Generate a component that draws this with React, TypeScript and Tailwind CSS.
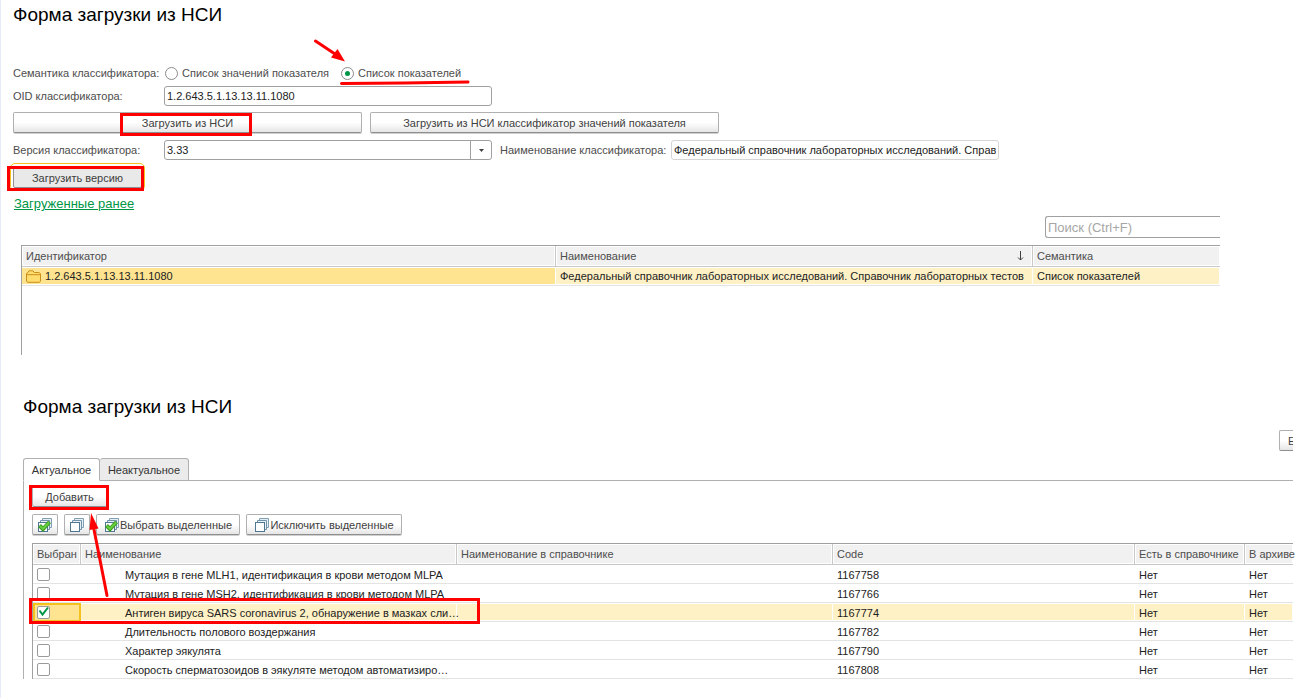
import React, { useState } from 'react';

interface TestRow {
  code: string;
  name: string;
}

const rows: TestRow[] = [
  { code: '1167758', name: 'Мутация в гене MLH1, идентификация в крови методом MLPA' },
  { code: '1167766', name: 'Мутация в гене MSH2, идентификация в крови методом MLPA' },
  { code: '1167774', name: 'Антиген вируса SARS coronavirus 2, обнаружение в мазках сли…' },
  { code: '1167782', name: 'Длительность полового воздержания' },
  { code: '1167790', name: 'Характер эякулята' },
  { code: '1167808', name: 'Скорость сперматозоидов в эякуляте методом автоматизиро…' },
];

const buttonClass =
  'flex h-[21px] items-center justify-center whitespace-nowrap rounded-[2px] border border-[#b0b0b0] border-b-[#8f8f8f] bg-linear-to-b from-white from-50% to-[#e6e6e6] shadow-[0_1px_0_#d0d0d0] text-[#404040]';
const fieldClass = 'h-5 w-full rounded-[3px] border border-[#a0a0a0] bg-white px-0.5 text-[#222] outline-none';
const radioClass =
  'grid size-[13px] appearance-none place-content-center rounded-full border border-[#8a8a8a] bg-white before:size-[5px] before:rounded-full checked:before:bg-[#009646]';
const thClass =
  'h-[21px] whitespace-nowrap border-b border-r border-[#c8c8c8] bg-[#f1f1f1] pl-1 text-left font-normal text-[#4d4d4d] shadow-[inset_0_0_0_1px_#fff]';
const tdClass =
  'h-[19px] whitespace-nowrap border-b border-[#e3e3e3] pl-1 shadow-[inset_0_1px_0_#fff,inset_-1px_-1px_0_#fff]';

// Red frame used to point the reader at a control
function Mark({ className }: { className: string }) {
  return <span className={`pointer-events-none absolute z-10 border-3 border-[#ff0000] ${className}`} />;
}

function StackIcon({ checked = false }: { checked?: boolean }) {
  return (
    <svg width="16" height="16" viewBox="0 0 16 16" fill="none" className="shrink-0" aria-hidden="true">
      <path d="M5.500 3.500v-2h9v9h-2" fill="#e8eff4" stroke="#7f9fb5" />
      <path d="M3.500 5.500v-2h9v9h-2" fill="#e8eff4" stroke="#6f92aa" />
      <rect x="1.500" y="5.500" width="9" height="9" fill="#fbfdfe" stroke="#4f7791" />
      {checked && (
        <>
          <path d="M2.500 8.500 6 12 12.500 5" stroke="#3c9a22" strokeWidth="4" />
          <path d="M3 9 6 11.800 12 5.500" stroke="#66d040" strokeWidth="2" />
        </>
      )}
    </svg>
  );
}

function FolderIcon() {
  return (
    <svg width="15" height="13" viewBox="0 0 15 13" className="shrink-0" aria-hidden="true">
      <path d="M.5 11V3.500L2 2.500 3 .8h4L8.200 2.500h5L14.500 4v7l-1 1.300H1.500z" fill="#ffdc6e" stroke="#c98f1b" />
      <path d="M1 4.700h13" stroke="#c98f1b" />
    </svg>
  );
}

function LoadForm() {
  const [semantics, setSemantics] = useState('indicators');

  return (
    <section className="pl-3 pt-1">
      <h1 className="text-[19px] leading-[22px] text-black">Форма загрузки из НСИ</h1>

      <div className="mt-[37px] flex h-5 items-center">
        <span className="w-[152px] shrink-0">Семантика классификатора:</span>
        <label className="flex items-center gap-1">
          <input
            type="radio"
            name="semantics"
            className={radioClass}
            checked={semantics === 'values'}
            onChange={() => setSemantics('values')}
          />
          Список значений показателя
        </label>
        <label className="relative ml-3 flex items-center gap-1">
          <input
            type="radio"
            name="semantics"
            className={radioClass}
            checked={semantics === 'indicators'}
            onChange={() => setSemantics('indicators')}
          />
          Список показателей
          <svg
            width="156"
            height="48"
            viewBox="0 0 156 48"
            fill="none"
            className="pointer-events-none absolute bottom-[-6px] left-[-27px]"
            aria-hidden="true"
          >
            <path d="M1.500 2 21 15" stroke="#f00" strokeWidth="3" strokeLinecap="round" />
            <path d="M31 22.500 17 18.500 23.500 10z" fill="#f00" />
            <path d="M27.500 44.500 90 44 154 43" stroke="#f00" strokeWidth="3" strokeLinecap="round" />
          </svg>
        </label>
      </div>

      <div className="mt-[3px] flex h-5 items-center">
        <label htmlFor="oid" className="w-[151px] shrink-0">OID классификатора:</label>
        <div className="w-[328px]">
          <input id="oid" className={fieldClass} defaultValue="1.2.643.5.1.13.13.11.1080" />
        </div>
      </div>

      <div className="mt-1.5 flex gap-2">
        <div className="relative w-[349px]">
          <button type="button" className={`${buttonClass} w-full`}>Загрузить из НСИ</button>
          <Mark className="left-[107px] top-px h-[23px] w-[132px]" />
        </div>
        <button type="button" className={`${buttonClass} w-[349px]`}>
          Загрузить из НСИ классификатор значений показателя
        </button>
      </div>

      <div className="mt-[7px] flex h-5 items-center">
        <label htmlFor="version" className="w-[151px] shrink-0">Версия классификатора:</label>
        <div className="relative w-[328px]">
          <select id="version" className={`${fieldClass} block appearance-none`} defaultValue="3.33">
            <option value="3.33">3.33</option>
          </select>
          <span className="pointer-events-none absolute inset-y-px right-px grid w-[21px] place-items-center border-l border-[#a0a0a0]">
            <svg width="5" height="3" viewBox="0 0 5 3" aria-hidden="true">
              <path d="M0 0h5L2.500 3z" fill="#404040" />
            </svg>
          </span>
        </div>
        <label htmlFor="title" className="ml-2 w-[171px] shrink-0">Наименование классификатора:</label>
        <div className="w-[328px]">
          <input
            id="title"
            className="h-5 w-full rounded-[3px] border border-[#d5d5d5] bg-white px-0.5 text-[#222] outline-none"
            defaultValue="Федеральный справочник лабораторных исследований. Справ"
          />
        </div>
      </div>

      <div className="relative mt-1.5 w-[129px]">
        <button
          type="button"
          className="block h-[22px] w-full rounded-[2px] border border-[#8f8f8f] bg-[#e9e9e9] pt-0.5 text-[#404040] outline-1 outline-offset-2 outline-[#f5c11e]"
        >
          Загрузить версию
        </button>
        <Mark className="left-[-6px] top-0 h-[25px] w-[137px]" />
      </div>

      <div className="mt-2">
        <a href="#loaded" className="ml-px text-[13px] leading-4 text-[#009646] underline">
          Загруженные ранее
        </a>
      </div>
    </section>
  );
}

function LoadedList() {
  return (
    <section id="loaded" className="ml-5 mr-24 mt-1">
      <div className="flex justify-end">
        <input
          type="search"
          aria-label="Поиск"
          placeholder="Поиск (Ctrl+F)"
          className="h-[22px] w-[175px] rounded-l-[3px] border border-r-0 border-[#a0a0a0] px-0.5 text-[13px] outline-none placeholder:text-[#a6a6a6]"
        />
      </div>
      <div className="mt-[7px] h-[110px] border-l border-t border-[#a0a0a0]">
        <table className="w-full table-fixed border-separate border-spacing-0">
          <colgroup>
            <col />
            <col className="w-[477px]" />
            <col className="w-[187px]" />
          </colgroup>
          <thead>
            <tr>
              <th className={thClass}>Идентификатор</th>
              <th className={thClass}>
                <span className="flex items-center justify-between pr-2">
                  Наименование
                  <svg width="7" height="10" viewBox="0 0 7 10" fill="none" stroke="#404040" aria-hidden="true">
                    <path d="M3.500 0v9M1 6.500l2.500 2.500L6 6.500" />
                  </svg>
                </span>
              </th>
              <th className={`${thClass} border-r-0`}>Семантика</th>
            </tr>
          </thead>
          <tbody>
            <tr className="bg-[#fef1c6] text-[#222]">
              <td className={`${tdClass} bg-[#fee391]`}>
                <span className="flex items-center gap-1">
                  <FolderIcon />
                  1.2.643.5.1.13.13.11.1080
                </span>
              </td>
              <td className={tdClass}>
                Федеральный справочник лабораторных исследований. Справочник лабораторных тестов
              </td>
              <td className={tdClass}>Список показателей</td>
            </tr>
          </tbody>
        </table>
      </div>
    </section>
  );
}

function SelectionForm() {
  const [tab, setTab] = useState('actual');
  const [selected, setSelected] = useState<string[]>(['1167774']);

  const toggle = (code: string) => {
    setSelected((prev) => (prev.includes(code) ? prev.filter((c) => c !== code) : [...prev, code]));
  };

  const tabClass = (name: string) =>
    tab === name ? 'border-b-white bg-white' : 'bg-[#ebebeb]';

  return (
    <section className="ml-[22px] mr-[23px] mt-[41px]">
      <h2 className="text-[19px] leading-[22px] text-black">Форма загрузки из НСИ</h2>

      <div className="mt-3 flex justify-end">
        <button
          type="button"
          className="h-[21px] w-3.5 overflow-hidden rounded-l-[2px] border border-r-0 border-[#b0b0b0] border-b-[#8f8f8f] bg-linear-to-b from-white from-50% to-[#e6e6e6] pl-2 text-left text-[#404040]"
        >
          Е
        </button>
      </div>

      <div className="mt-[7px] flex border-b border-[#b0b0b0] text-[#333]" role="tablist">
        <button
          type="button"
          role="tab"
          aria-selected={tab === 'actual'}
          onClick={() => setTab('actual')}
          className={`-mb-px h-[23px] w-[77px] rounded-t-[3px] border border-[#b0b0b0] ${tabClass('actual')}`}
        >
          Актуальное
        </button>
        <button
          type="button"
          role="tab"
          aria-selected={tab === 'inactive'}
          onClick={() => setTab('inactive')}
          className={`-mb-px h-[23px] w-[89px] rounded-t-[3px] border border-l-0 border-[#b0b0b0] ${tabClass('inactive')}`}
        >
          Неактуальное
        </button>
      </div>

      <div className="relative border-l border-[#b0b0b0] pl-2 pt-[5px]">
        <div className="relative w-[75px]">
          <button type="button" className={`${buttonClass} w-full`}>Добавить</button>
          <Mark className="left-[-3px] top-[-1px] h-[25px] w-20" />
        </div>

        <div className="mt-[7px] flex gap-1.5">
          <button type="button" aria-label="Выбрать все" className={`${buttonClass} w-[26px]`}>
            <StackIcon checked />
          </button>
          <button type="button" aria-label="Исключить все" className={`${buttonClass} w-[26px]`}>
            <StackIcon />
          </button>
          <button type="button" className={`${buttonClass} w-36`}>
            <StackIcon checked />
            Выбрать выделенные
          </button>
          <button type="button" className={`${buttonClass} w-[156px]`}>
            <StackIcon />
            Исключить выделенные
          </button>
        </div>

        <div className="mt-2 border-l border-t border-[#a0a0a0]">
          <table className="w-full table-fixed border-separate border-spacing-0">
            <colgroup>
              <col className="w-12" />
              <col className="w-[376px]" />
              <col />
              <col className="w-[302px]" />
              <col className="w-[110px]" />
              <col className="w-12" />
            </colgroup>
            <thead>
              <tr>
                <th className={thClass}>Выбран</th>
                <th className={thClass}>Наименование</th>
                <th className={thClass}>Наименование в справочнике</th>
                <th className={thClass}>Code</th>
                <th className={thClass}>Есть в справочнике</th>
                <th className={`${thClass} border-r-0`}>В архиве</th>
              </tr>
            </thead>
            <tbody className="text-[#222]">
              {rows.map((row) => {
                const isOn = selected.includes(row.code);
                return (
                  <tr key={row.code} className={isOn ? 'bg-[#fef1c6]' : 'bg-white'}>
                    <td className={`${tdClass} ${isOn ? 'bg-[#fee391] outline-2 -outline-offset-2 outline-[#f5c11e]' : ''}`}>
                      <span className="relative block w-[13px]">
                        <input
                          type="checkbox"
                          aria-label={row.name}
                          checked={isOn}
                          onChange={() => toggle(row.code)}
                          className="block size-[13px] appearance-none rounded-[2px] border border-[#9a9a9a] bg-white"
                        />
                        {isOn && (
                          <svg
                            width="13"
                            height="13"
                            viewBox="0 0 13 13"
                            fill="none"
                            className="pointer-events-none absolute inset-0"
                            aria-hidden="true"
                          >
                            <path d="M2.500 4.500 5.500 8.500 11 1.500" stroke="#009646" strokeWidth="2" />
                          </svg>
                        )}
                      </span>
                    </td>
                    <td className={`${tdClass} pl-11 pt-0.5`}>{row.name}</td>
                    <td className={tdClass} />
                    <td className={`${tdClass} pt-0.5`}>{row.code}</td>
                    <td className={`${tdClass} pt-0.5`}>Нет</td>
                    <td className={`${tdClass} pt-0.5`}>Нет</td>
                  </tr>
                );
              })}
            </tbody>
          </table>
        </div>

        <Mark className="left-[5px] top-[117px] h-[26px] w-[451px]" />
        <svg
          width="24"
          height="90"
          viewBox="0 0 24 90"
          fill="none"
          className="pointer-events-none absolute left-[64px] top-[30px] z-10"
          aria-hidden="true"
        >
          <path d="M5.500 16 19 84.500" stroke="#f00" strokeWidth="3" strokeLinecap="round" />
          <path d="M3 2 1.500 19 10.500 17.500z" fill="#f00" />
        </svg>
      </div>
    </section>
  );
}

export default function App() {
  return (
    <main className="min-h-screen border-l border-[#e6edf9] bg-white font-['Liberation_Sans',Arial,sans-serif] text-[11px] leading-4 text-[#4d4d4d]">
      <LoadForm />
      <LoadedList />
      <SelectionForm />
    </main>
  );
}
